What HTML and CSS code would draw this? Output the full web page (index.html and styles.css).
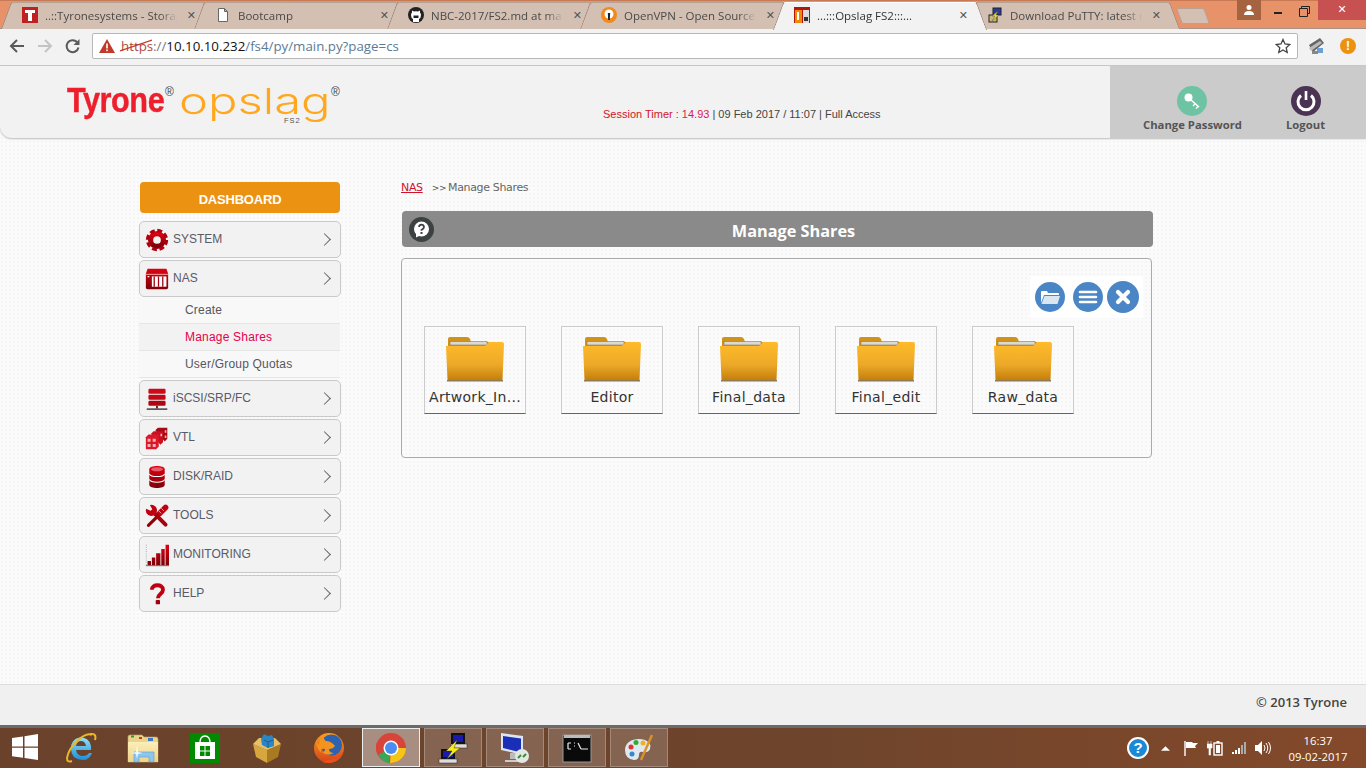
FILE: index.html
```html
<!DOCTYPE html>
<html lang="en">
<head>
<meta charset="utf-8">
<title>Opslag FS2</title>
<link rel="stylesheet" href="styles.css">
</head>
<body>
<svg class="defs" width="0" height="0" aria-hidden="true">
  <defs>
    <linearGradient id="red" x1="0" y1="0" x2="0" y2="1"><stop offset="0" stop-color="#e00012"/><stop offset="1" stop-color="#7c0008"/></linearGradient>
    <linearGradient id="fold" x1="0" y1="0" x2="0" y2="1"><stop offset="0" stop-color="#ffbb2a"/><stop offset=".6" stop-color="#eca928"/><stop offset="1" stop-color="#c47f0b"/></linearGradient>
    <linearGradient id="iebl" x1="0" y1="0" x2="0" y2="1"><stop offset="0" stop-color="#8fe0f8"/><stop offset="1" stop-color="#1c8fd8"/></linearGradient>
    <linearGradient id="foxo" x1="0" y1="0" x2="0" y2="1"><stop offset="0" stop-color="#f5a021"/><stop offset="1" stop-color="#d8401a"/></linearGradient>
    <linearGradient id="expl" x1="0" y1="0" x2="0" y2="1"><stop offset="0" stop-color="#fbeeb8"/><stop offset="1" stop-color="#eed38a"/></linearGradient>
    <symbol id="folder" viewBox="0 0 60 48">
      <path d="M3 4q0-2 2-2h17q2 0 3 2l1 3H50v10H3z" fill="#d1921a"/>
      <rect x="5" y="6.500" width="37" height="3.500" fill="#dcdad0" stroke="#8d7a55" stroke-width=".6"/>
      <path d="M1 11H40l4-4H57q2 0 2 2l-1.500 36H2.500z" fill="url(#fold)"/>
      <rect x="2" y="45" width="56" height="1.500" fill="#8f7a55"/>
    </symbol>
  </defs>
</svg>

<div class="tabstrip">
  <div class="tab"><svg class="fav" viewBox="0 0 16 16"><rect width="16" height="16" fill="#c0201f"/><path d="M3 3h10v3H10v8H6V6H3z" fill="#fff"/></svg><span class="tab-text">..::Tyronesystems - Storag</span><span class="tab-x">✕</span></div>
  <div class="tab"><svg class="fav" viewBox="0 0 16 16"><path d="M3.500 1.500h6l3 3v10h-9z M9.500 1.500v3h3" fill="#fff" stroke="#666"/></svg><span class="tab-text">Bootcamp</span><span class="tab-x">✕</span></div>
  <div class="tab"><svg class="fav" viewBox="0 0 16 16"><circle cx="8" cy="8" r="8" fill="#222"/><path d="M5 15v-3q-2-1-2-4 0-1.500 1-2.500V3.500l2 1q2-.5 4 0l2-1v2q1 1 1 2.500 0 3-2 4v3z" fill="#fff"/><path d="M5.500 8.500h5v2.500h-5z" fill="#222"/></svg><span class="tab-text">NBC-2017/FS2.md at ma</span><span class="tab-x">✕</span></div>
  <div class="tab"><svg class="fav" viewBox="0 0 16 16"><circle cx="8" cy="8" r="8" fill="#f08a1d"/><circle cx="8" cy="7" r="4.500" fill="#fff"/><path d="M6.800 6h2.400l-.4 7H7.200z" fill="#123"/></svg><span class="tab-text">OpenVPN - Open Source</span><span class="tab-x">✕</span></div>
  <div class="tab tab-active"><svg class="fav" viewBox="0 0 16 16"><rect width="16" height="16" fill="#b3150f"/><rect x="1" y="3" width="7" height="13" fill="#f08a00"/><rect x="9" y="3" width="6" height="13" fill="#ddd"/><rect x="3" y="5" width="2" height="8" fill="#fff"/><rect x="10" y="10" width="4" height="4" fill="#333"/></svg><span class="tab-text">...:::Opslag FS2:::...</span><span class="tab-x">✕</span></div>
  <div class="tab"><svg class="fav" viewBox="0 0 16 16"><rect x="6" y="1" width="8" height="7" fill="#2a3a9a" stroke="#222"/><rect x="2" y="8" width="8" height="7" fill="#c9b878" stroke="#222"/><path d="M11 4 5 9h3l-3 5 7-6H9z" fill="#f5e02a" stroke="#444" stroke-width=".4"/></svg><span class="tab-text">Download PuTTY: latest r</span><span class="tab-x">✕</span></div>
  <div class="newtab"></div>
  <div class="winbtns">
    <div class="win-user"><svg viewBox="0 0 12 12" width="12" height="12"><circle cx="6" cy="3.500" r="2.500" fill="#fff"/><path d="M1 11q0-4 5-4t5 4z" fill="#fff"/></svg></div>
    <div class="win-min"></div>
    <div class="win-max"><svg viewBox="0 0 11 11" width="11" height="11"><path d="M2.500 2.500V.5h8v7h-2M.5 2.500h8v8h-8z" fill="none" stroke="#222"/></svg></div>
    <div class="win-close">✕</div>
  </div>
</div>

<div class="toolbar">
  <svg class="nav" viewBox="0 0 16 16"><path d="M15 8H2.500M8 2 2 8l6 6" fill="none" stroke="#5a5a5a" stroke-width="2"/></svg>
  <svg class="nav" viewBox="0 0 16 16"><path d="M1 8h12.500M8 2l6 6-6 6" fill="none" stroke="#c4c4c4" stroke-width="2"/></svg>
  <svg class="nav" viewBox="0 0 16 16"><path d="M13.500 9.500A6 6 0 1 1 12 4" fill="none" stroke="#5a5a5a" stroke-width="2"/><path d="M14.500 1v6h-6z" fill="#5a5a5a"/></svg>
  <div class="omnibox">
    <svg class="warn" viewBox="0 0 16 14"><path d="M8 0l8 14H0z" fill="#c0392b"/><rect x="7.200" y="4.500" width="1.600" height="5" fill="#fff"/><rect x="7.200" y="10.500" width="1.600" height="1.700" fill="#fff"/></svg>
    <span class="url"><span class="scheme">https<svg class="strike" viewBox="0 0 32 12" preserveAspectRatio="none"><path d="M0 11 32 1" stroke="#c0392b" stroke-width="1.300"/></svg></span><span class="url-dim">://</span><span class="url-host">10.10.10.232</span><span class="url-path">/fs4/py/main.py?page=cs</span></span>
    <svg class="star" viewBox="0 0 16 16"><path d="M8 1.500l2 4.500 4.800.5-3.600 3.200 1 4.800L8 12l-4.200 2.500 1-4.800L1.200 6.500 6 6z" fill="none" stroke="#444" stroke-width="1.300"/></svg>
  </div>
  <svg class="ext" viewBox="0 0 20 20"><path d="M3 9l11-7 4 5-11 9z" fill="#666"/><path d="M3 12l11-7 2 2-11 8z" fill="#bbb"/><rect x="11" y="12" width="6" height="5" fill="#6aa0d8"/><rect x="6" y="15" width="6" height="3" fill="#888"/></svg>
  <div class="ext-alert">!</div>
</div>

<header class="pagehead">
  <div class="logo">
    <span class="logo-tyrone">Tyrone</span><span class="reg reg-a">®</span>
    <span class="logo-op"><span class="logo-opslag">opslag</span><span class="logo-fs">FS2</span></span><span class="reg">®</span>
  </div>
  <div class="session"><span class="s-red">Session Timer : </span><span class="s-pink">14.93</span> | 09 Feb 2017 / 11:07 | Full Access</div>
  <div class="headbtns">
    <div class="headbtn">
      <svg class="headicon" viewBox="0 0 30 30"><circle cx="15" cy="15" r="15" fill="#6ec3a2"/><circle cx="11.500" cy="11.500" r="4" fill="#fff"/><path d="M14 14l8 7M18 18l-2 2M21 20.500l-2 2" stroke="#fff" stroke-width="1.500" fill="none"/></svg>
      <span>Change Password</span>
    </div>
    <div class="headbtn">
      <svg class="headicon" viewBox="0 0 30 30"><circle cx="15" cy="15" r="15" fill="#4b3354"/><path d="M10 9.500a8 8 0 1 0 10 0" fill="none" stroke="#fff" stroke-width="3"/><rect x="13.700" y="5" width="2.600" height="9" fill="#fff"/></svg>
      <span>Logout</span>
    </div>
  </div>
</header>

<main class="main">
  <nav class="sidebar">
    <div class="dash">DASHBOARD</div>
    <div class="menu">
      <div class="item"><svg class="micon" viewBox="0 0 28 28"><circle cx="14" cy="14" r="7.500" fill="none" stroke="url(#red)" stroke-width="6"/><circle cx="14" cy="14" r="11" fill="none" stroke="#b00010" stroke-width="4" stroke-dasharray="5.640 3"/></svg><span>SYSTEM</span></div>
      <div class="item"><svg class="micon" viewBox="0 0 28 28"><path d="M3 2h22l2 6v16q0 2-2 2H3q-2 0-2-2V8z" fill="url(#red)"/><rect x="1" y="8" width="26" height="1" fill="#fbb"/><rect x="8" y="11" width="17" height="12" fill="#fff"/><path d="M10 11v12h1.500V11zm5 0v12h1.500V11zm5 0v12h1.500V11z" fill="#a00010"/><rect x="3" y="10.500" width="2" height="1.500" fill="#fff"/></svg><span>NAS</span></div>
      <div class="subs">
        <div class="sub">Create</div>
        <div class="sub sub-on">Manage Shares</div>
        <div class="sub">User/Group Quotas</div>
      </div>
      <div class="item"><svg class="micon" viewBox="0 0 28 28"><rect x="4" y="2" width="20" height="6" rx="1.500" fill="#cc0a18"/><rect x="4" y="9" width="20" height="6" rx="1.500" fill="#c00816"/><rect x="4" y="16" width="20" height="6" rx="1.500" fill="#b00612"/><rect x="13" y="22" width="2" height="3" fill="#700"/><rect x="2" y="25" width="24" height="1.600" fill="#333"/></svg><span>iSCSI/SRP/FC</span></div>
      <div class="item"><svg class="micon" viewBox="0 0 28 28"><path d="M12 5l3-3h11v13l-3 3z" fill="#a80a14"/><path d="M7 9l3-3h11v13l-3 3z" fill="#c8101e"/><path d="M1 13l3-3h12v14l-3 3H1z" fill="#d9182a"/><path d="M3 15h3.500v3.500H3zm6 0h3.500v3.500H9zm-6 6h3.500v3.500H3zm6 0h3.500v3.500H9zM18 9h2v3h-2zM23 5h2v3h-2zM23 11h2v3h-2z" fill="#f6b0b0"/></svg><span>VTL</span></div>
      <div class="item"><svg class="micon" viewBox="0 0 28 28"><path d="M5 5c0-5 18-5 18 0v18c0 5-18 5-18 0z" fill="url(#red)"/><path d="M5 10.500c2 4 16 4 18 0M5 17c2 4 16 4 18 0" fill="none" stroke="#fff" stroke-width="1.200"/><ellipse cx="14" cy="5" rx="7" ry="2.400" fill="#e85a64"/></svg><span>DISK/RAID</span></div>
      <div class="item"><svg class="micon" viewBox="0 0 28 28"><path d="M4 25 17 12" stroke="#900008" stroke-width="3.600" stroke-linecap="round"/><path d="M17 11 24 4" stroke="#c00010" stroke-width="6.500" stroke-linecap="round"/><path d="M19 11l-3-3M22 8l-3-3" stroke="#f2f2f2" stroke-width=".8"/><path d="M9 9 24 24" stroke="#a8000e" stroke-width="4.600" stroke-linecap="round"/><circle cx="7.500" cy="7.500" r="6.500" fill="#c00010"/><path d="M0 5l6.500 3L8.500 6 5 0H0z" fill="#f2f2f2"/></svg><span>TOOLS</span></div>
      <div class="item"><svg class="micon" viewBox="0 0 28 28"><path d="M1.500 2v24" stroke="#999" stroke-dasharray="1 1.500"/><path d="M3 21h4v5H3zm5-4h4v9H8zm5-5h5v14h-5zm6-5h4v19h-4zm5-5h4v24h-4z" fill="url(#red)"/><rect x="1" y="26" width="27" height="1" fill="#555"/></svg><span>MONITORING</span></div>
      <div class="item"><svg class="micon" viewBox="0 0 28 28"><path d="M8 9c0-7 13-7 13 0 0 5-6 5-6 10" fill="none" stroke="#c00010" stroke-width="4.500"/><rect x="12.500" y="21" width="5" height="5" rx="1" fill="#a00010"/></svg><span>HELP</span></div>
    </div>
  </nav>
  <section class="content">
    <div class="crumb"><a class="crumb-link">NAS</a><span class="crumb-sep">&gt;&gt;</span><span>Manage Shares</span></div>
    <div class="titlebar">
      <svg class="help" viewBox="0 0 25 25"><circle cx="12.500" cy="12.500" r="12.500" fill="#3c4242"/><circle cx="12.500" cy="12" r="7.500" fill="#fff"/><path d="M7 16.500v4l4-2z" fill="#fff"/><path d="M10 10q.3-2.300 2.500-2.300T15 10q0 1.500-2.500 3v.8" fill="none" stroke="#3c4242" stroke-width="1.800"/><rect x="11.500" y="15" width="2" height="2" fill="#3c4242"/></svg>
      <h1>Manage Shares</h1>
    </div>
    <div class="panel">
      <div class="actions">
        <svg class="act" viewBox="0 0 30 30"><circle cx="15" cy="15" r="15" fill="#4a86c5"/><path d="M6 10q0-1 1-1h5l1 2h10q1 0 1 1v1H9l-3 8z" fill="#fff"/><path d="M9.500 14H25l-2.500 8H6.500z" fill="#d9e6f3"/></svg>
        <svg class="act" viewBox="0 0 30 30"><circle cx="15" cy="15" r="15" fill="#4a86c5"/><path d="M7 10h16M7 15h16M7 20h16" stroke="#fff" stroke-width="2.600" stroke-linecap="round"/></svg>
        <svg class="act act-x" viewBox="0 0 32 32"><circle cx="16" cy="16" r="16" fill="#4a86c5"/><path d="M11 11l10 10M21 11 11 21" stroke="#fff" stroke-width="4.200" stroke-linecap="round"/></svg>
      </div>
      <div class="tiles">
        <div class="tile"><svg class="fold"><use href="#folder"/></svg><span>Artwork_In...</span></div>
        <div class="tile"><svg class="fold"><use href="#folder"/></svg><span>Editor</span></div>
        <div class="tile"><svg class="fold"><use href="#folder"/></svg><span>Final_data</span></div>
        <div class="tile"><svg class="fold"><use href="#folder"/></svg><span>Final_edit</span></div>
        <div class="tile"><svg class="fold"><use href="#folder"/></svg><span>Raw_data</span></div>
      </div>
    </div>
  </section>
</main>

<footer class="pagefoot">© 2013 Tyrone</footer>

<div class="taskbar">
  <div class="start"><svg viewBox="0 0 26 26" width="26" height="26"><path d="M0 4l11-1.500V12.500H0zM12.500 2.300 26 0v12.500H12.500zM0 13.800h11v10L0 22.300zM12.500 13.800H26V26l-13.500-2z" fill="#fff"/></svg></div>
  <div class="slot"><svg class="tico" viewBox="0 0 32 32"><path d="M6 17a10 10 0 0 1 20-3v4H11q1 6 7 6 4 0 6-3h3q-3 8-10 7Q6 27 6 17zm5-3h10q-1-5-5-5t-5 5z" fill="url(#iebl)"/><path d="M27 3C20-1 4 14 2 26q0 5 5 3" fill="none" stroke="#e8b82a" stroke-width="2"/><path d="M25 2q7-1 5 6" fill="none" stroke="#e8b82a" stroke-width="2"/></svg></div>
  <div class="slot"><svg class="tico" viewBox="0 0 32 32"><path d="M1 5q0-2 2-2h12l2 2h12q2 0 2 2v23H1z" fill="#e9d48a" stroke="#b9a263" stroke-width=".6"/><rect x="4" y="3.500" width="3" height="2" fill="#2a9a3a"/><rect x="12" y="5" width="3" height="2" fill="#c03a2a"/><rect x="21" y="6" width="5" height="3" fill="#3a7ac8"/><path d="M1 10h30v20H1z" fill="url(#expl)"/><path d="M7 20h20v10h-5v-5H12v5H7z" fill="#8cc6ec" stroke="#5a9ac8" stroke-width=".6"/><path d="M9 20l1-7 1 7 5 1-5 1-1 5-1-5-5-1z" fill="#fff" opacity=".85"/></svg></div>
  <div class="slot"><svg class="tico" viewBox="0 0 32 32"><rect x="1" y="1" width="30" height="30" fill="#008a00"/><path d="M11 11q0-7 5-7t5 7" fill="none" stroke="#fff" stroke-width="1.300"/><path d="M6 10h20v17H6z" fill="#fff"/><path d="M11 14h4.500v4.500H11zm5.500 0H21v4.500h-4.500zM11 19.500h4.500V24H11zm5.500 0H21V24h-4.500z" fill="#008a00"/></svg></div>
  <div class="slot"><svg class="tico" viewBox="0 0 32 32"><path d="M2 12l14 6v13L5 25z" fill="#d8a63e"/><path d="M30 12l-14 6v13l11-6z" fill="#a87a22"/><path d="M2 12l6-6 16 0 6 6-14 6z" fill="#e8c068"/><path d="M10 7l3-5 4 2 4-1 2 4 0 7-6 2-6-3z" fill="#2d86c4"/><path d="M13 8l4 2 5-2M17 10v6" stroke="#1a5f94" fill="none"/></svg></div>
  <div class="slot"><svg class="tico" viewBox="0 0 32 32"><circle cx="16" cy="16" r="15" fill="url(#foxo)"/><circle cx="18.500" cy="13" r="10.500" fill="#2d62ae"/><path d="M3 8q1 4 3 5 0-6 5-10-1 4 2 6 5 0 9 5-2 3-6 3 0 4 5 4-7 4-12-1 3 0 3-3-5-1-4 4-5-6-5-13z" fill="#f4931d"/><path d="M9 30q10 3 17-3 4-4 5-10-2 7-9 9-7 2-13 4z" fill="#e8501a"/></svg></div>
  <div class="slot slot-on"><svg class="tico" viewBox="0 0 32 32"><circle cx="16" cy="16" r="15" fill="#d8443a"/><path d="M16 16 3 23a15 15 0 0 1-1-13z" fill="#d8443a"/><path d="M16 16h15a15 15 0 0 1-15 15h-1z" fill="#f5c518"/><path d="M16 16 14 31A15 15 0 0 1 3 23z" fill="#3aa757"/><circle cx="16" cy="16" r="7.500" fill="#fff"/><circle cx="16" cy="16" r="6" fill="#4a8cf0"/></svg></div>
  <div class="slot slot-pin"><svg class="tico" viewBox="0 0 32 32"><rect x="14" y="1" width="14" height="11" fill="#111"/><rect x="16" y="3" width="10" height="7" fill="#1a1ab0"/><rect x="4" y="17" width="14" height="10" fill="#111"/><rect x="6" y="19" width="10" height="6" fill="#1a1ab0"/><rect x="14" y="12" width="16" height="4" fill="#ddd" stroke="#222" stroke-width=".5"/><rect x="2" y="27" width="18" height="4" fill="#ddd" stroke="#222" stroke-width=".5"/><path d="M20 8 9 19h6l-5 8 13-11h-6z" fill="#f5ec1a" stroke="#333" stroke-width=".4"/></svg></div>
  <div class="slot slot-pin"><svg class="tico" viewBox="0 0 32 32"><path d="M2 1l22 3v19L2 18z" fill="#dde3f0"/><path d="M4 4l18 2.500v14L4 16z" fill="#1a2fb8"/><rect x="11" y="21" width="6" height="6" fill="#bbb"/><path d="M6 28h14v2H6z" fill="#ccc"/><circle cx="23" cy="24" r="7" fill="#e4e8e4"/><path d="M19 26l3-3M27 22l-3 3" stroke="#3a8a3a" stroke-width="2"/></svg></div>
  <div class="slot slot-pin"><svg class="tico" viewBox="0 0 32 32"><rect x="2" y="3" width="28" height="27" fill="#0a0a0a" stroke="#999"/><rect x="3" y="3" width="26" height="3" fill="#bbb"/><path d="M7 11h3M7 17h3M7 11v6M13 11h1M13 14h1M17 11l3 6M20 17h7" stroke="#eee" stroke-width="1.200" fill="none"/></svg></div>
  <div class="slot slot-pin"><svg class="tico" viewBox="0 0 32 32"><path d="M2 18C2 8 14 5 22 8q7 3 5 9-2 4-7 3-4-1-4 3 0 5-5 5Q2 27 2 18z" fill="#dfe8ef"/><circle cx="8" cy="15" r="2.500" fill="#d33"/><circle cx="13" cy="10.500" r="2.500" fill="#3a3"/><circle cx="20" cy="11" r="2.500" fill="#f0b020"/><circle cx="9" cy="22" r="2.500" fill="#38c"/><path d="M18 28 29 3" stroke="#d9922a" stroke-width="2.500"/></svg></div>
  <div class="tray">
    <div class="tray-help">?</div>
    <svg class="tray-ico tray-up" viewBox="0 0 10 6"><path d="M0 6l5-5 5 5z" fill="#fff"/></svg>
    <svg class="tray-ico" viewBox="0 0 16 16"><path d="M2 1v15" stroke="#fff" stroke-width="1.400"/><path d="M3 2h6l1 1h5l-3 3 1 2H3z" fill="#fff"/></svg>
    <svg class="tray-ico" viewBox="0 0 16 16"><path d="M1 1v3M4 1v3M0 4h5v4H3.500v7H2V8H0z" fill="#fff" stroke="#fff" stroke-width=".6"/><rect x="7" y="3" width="8" height="12" fill="none" stroke="#fff" stroke-width="1.400"/><rect x="9" y="5" width="4" height="8" fill="#fff"/><rect x="9.500" y="1" width="3" height="2" fill="#fff"/></svg>
    <svg class="tray-ico" viewBox="0 0 16 16"><path d="M1 12h2v2H1zM4 10h2v4H4zM7 8h2v6H7z" fill="#fff"/><path d="M10 5h2v9h-2zM13 2h2v12h-2z" fill="#aaa"/></svg>
    <svg class="tray-ico" viewBox="0 0 16 16"><path d="M0 5h3l4-4v14l-4-4H0z" fill="#fff"/><path d="M9 5q2 3 0 6M11 3q3.500 5 0 10M13.500 2q4 6 0 12" fill="none" stroke="#fff" stroke-width="1"/></svg>
    <div class="clock"><span>16:37</span><span>09-02-2017</span></div>
  </div>
</div>
</body>
</html>
```

FILE: styles.css
```css
* { box-sizing: border-box; }
html, body { margin: 0; padding: 0; }
body {
  width: 1366px;
  height: 768px;
  overflow: hidden;
  display: flex;
  flex-direction: column;
  font-family: "Liberation Sans", Arial, sans-serif;
  background: #fbfbfb radial-gradient(#f5f5f5 1px, transparent 1px) 0 0 / 4px 4px;
}
.defs { position: absolute; }

/* browser tab strip */
.tabstrip {
  height: 29px;
  flex: none;
  display: flex;
  padding: 1px 0 0 6px;
  background: #e8926a;
  border-top: 1px solid #c87a55;
  border-bottom: 1px solid #a89084;
}
.tab {
  position: relative;
  width: 204px;
  height: 27px;
  margin-right: -11px;
  display: flex;
  align-items: center;
  padding: 0 14px 1px 16px;
  gap: 7px;
  font: 11.500px "Open Sans", sans-serif;
  color: #4a4a4a;
}
.tab::before, .tab::after {
  content: "";
  position: absolute;
  top: 0;
  bottom: 0;
  width: 55%;
  background: #d4bfb3;
  border-top: 1px solid #b8a294;
}
.tab::before {
  left: 0;
  transform: skewX(-20deg);
  border-left: 1px solid #9a8478;
  border-radius: 3px 0 0 0;
}
.tab::after {
  right: 0;
  transform: skewX(20deg);
  border-right: 1px solid #9a8478;
  border-radius: 0 3px 0 0;
}
.tab > * { position: relative; z-index: 1; }
.tab-active { z-index: 2; height: 28px; color: #333; padding-bottom: 2px; }
.tab-active::before, .tab-active::after { background: #f2f2f2; border-top-color: #fff; }
.fav { width: 16px; height: 16px; flex: none; }
.tab-text {
  flex: 1;
  min-width: 0;
  white-space: nowrap;
  -webkit-mask-image: linear-gradient(to right, #000 85%, transparent 98%);
  mask-image: linear-gradient(to right, #000 85%, transparent 98%);
}
.tab-x { font-size: 11px; color: #555; font-family: "DejaVu Sans", sans-serif; font-weight: bold; }
.newtab {
  width: 28px;
  height: 16px;
  margin: 6px 0 0 15px;
  background: #d4bfb3;
  border: 1px solid #b8a294;
  border-radius: 2px;
  transform: skewX(20deg);
}
.winbtns {
  margin: -2px 0 0 auto;
  display: flex;
  height: 20px;
}
.win-user {
  width: 24px;
  margin-right: 13px;
  background: #a5633f;
  display: flex;
  align-items: center;
  justify-content: center;
}
.win-min { width: 25px; position: relative; }
.win-min::after { content: ""; position: absolute; left: 0; top: 12px; width: 8px; height: 2px; background: #222; }
.win-max { width: 11px; padding-top: 3px; margin-right: 8px; }
.win-close {
  width: 48px;
  background: #c75050;
  color: #fff;
  text-align: center;
  font: bold 11px/20px "DejaVu Sans", sans-serif;
}

/* browser toolbar */
.toolbar {
  height: 37px;
  flex: none;
  display: flex;
  align-items: center;
  padding: 0 9px 2px;
  background: #f2f2f2;
  border-bottom: 1px solid #c8c8c8;
  gap: 12px;
}
.nav { width: 16px; height: 16px; flex: none; }
.omnibox {
  width: 1206px;
  height: 26px;
  margin-left: -1px;
  display: flex;
  align-items: center;
  background: #fff;
  border: 1px solid #b8b8b8;
  border-radius: 2px;
  padding: 0 6px;
}
.warn { width: 16px; height: 14px; margin-right: 6px; flex: none; }
.url { font: 13.300px "Open Sans", sans-serif; color: #5c7a94; white-space: nowrap; }
.scheme { position: relative; color: #b04a3e; }
.strike { position: absolute; left: -1px; top: 2px; width: 32px; height: 13px; }
.url-dim { color: #777; }
.url-host { color: #111; }
.star { width: 16px; height: 16px; margin-left: auto; flex: none; }
.ext { width: 20px; height: 20px; flex: none; margin-left: -4px; }
.ext-alert {
  width: 16px;
  height: 16px;
  margin-left: 2px;
  border-radius: 50%;
  background: #ec9213;
  color: #fff;
  font: bold 12px/16px "Liberation Sans", sans-serif;
  text-align: center;
}

/* page header */
.pagehead {
  height: 72px;
  flex: none;
  display: flex;
  background: #f2f2f2;
  border-radius: 0 0 0 12px;
  box-shadow: 0 1px 2px #bbb;
  position: relative;
}
.logo {
  width: 603px;
  padding: 15px 0 0 67px;
  display: flex;
  align-items: flex-start;
  white-space: nowrap;
}
.logo-tyrone {
  display: inline-block;
  width: 96px;
  font: bold 33px/38px "Liberation Sans", sans-serif;
  color: #ee1f2d;
  letter-spacing: -.5px;
  -webkit-text-stroke: .4px #ee1f2d;
  transform: scale(.93, 1.05);
  transform-origin: 0 50%;
}
.reg { font-size: 12px; color: #444; margin-top: 4px; }
.reg-a { width: 10px; margin: 4px 4px 0 2px; }
.logo-op { position: relative; width: 152px; height: 42px; }
.logo-opslag {
  display: block;
  margin-top: 2px;
  font: 300 36px/36px Inter, sans-serif;
  color: #ffa81f;
  transform: scaleX(1.36);
  transform-origin: 0 50%;
}
.logo-fs {
  position: absolute;
  left: 105px;
  top: 37px;
  font: 7.500px/5px "Liberation Sans", sans-serif;
  color: #555;
  letter-spacing: 1px;
}
.session {
  width: 507px;
  padding-top: 42px;
  font-size: 11px;
  line-height: 13px;
  color: #444;
  white-space: nowrap;
}
.s-red { color: #d2122a; }
.s-pink { color: #d81b50; }
.headbtns {
  width: 256px;
  margin-left: auto;
  background: #cbcbcb;
  display: flex;
  padding-left: 33px;
  gap: 44px;
}
.headbtn {
  display: flex;
  flex-direction: column;
  align-items: center;
  padding-top: 20px;
  font: bold 11.300px/14px "Open Sans", sans-serif;
  color: #555;
  white-space: nowrap;
}
.headicon { width: 30px; height: 30px; margin-bottom: 2px; }

/* main */
.main { flex: 1; display: flex; padding: 44px 0 0 139px; min-height: 0; }
.sidebar { width: 202px; flex: none; }
.dash {
  width: 200px;
  height: 31px;
  margin-left: 1px;
  background: #ec9213;
  border-radius: 4px;
  color: #fff;
  font-weight: bold;
  font-size: 13px;
  line-height: 35px;
  text-align: center;
  letter-spacing: -.2px;
}
.menu { margin-top: 8px; display: flex; flex-direction: column; gap: 2px; }
.item {
  position: relative;
  height: 37px;
  display: flex;
  align-items: center;
  padding: 0 0 2px 5px;
  gap: 4px;
  background: #f2f2f2;
  border: 1px solid #c9c9c9;
  border-radius: 5px;
  font-size: 12px;
  color: #5a5a66;
}
.item::after {
  content: "";
  position: absolute;
  right: 11px;
  top: 13px;
  width: 8px;
  height: 8px;
  border-top: 1.300px solid #666;
  border-right: 1.300px solid #666;
  transform: rotate(45deg);
}
.micon { width: 24px; height: 24px; flex: none; margin-top: 2px; }
.subs { margin: -2px 1px 0 0; background: #f8f8f8; }
.sub {
  height: 27px;
  padding: 6px 0 0 46px;
  font-size: 12px;
  line-height: 14px;
  letter-spacing: .2px;
  color: #56565f;
  border-bottom: 1px solid #e6e6e6;
}
.sub-on { color: #e6004c; background: #f2f2f2; }

/* content */
.content { width: 752px; margin-left: 60px; flex: none; }
.crumb {
  display: flex;
  align-items: baseline;
  height: 29px;
  font: 11px/11px "DejaVu Sans", sans-serif;
  color: #666;
  letter-spacing: -.35px;
}
.crumb-link { color: #d2122a; text-decoration: underline; margin-right: 9px; }
.crumb-sep { margin-right: 2px; color: #555; font-size: 9px; }
.titlebar {
  width: 751px;
  height: 36px;
  margin-left: 1px;
  position: relative;
  display: flex;
  align-items: center;
  justify-content: center;
  background: #8a8a8a;
  border-radius: 4px;
}
.titlebar h1 {
  margin: 4px 0 0 32px;
  font: bold 16.300px "Open Sans", sans-serif;
  color: #fff;
}
.help { position: absolute; left: 7px; top: 6px; width: 25px; height: 25px; }
.panel {
  width: 751px;
  height: 200px;
  margin-top: 11px;
  position: relative;
  border: 1px solid #aaa;
  border-radius: 4px;
  padding: 67px 0 0 22px;
}
.actions {
  position: absolute;
  right: 8px;
  top: 17px;
  display: flex;
  align-items: center;
  gap: 8px;
  padding: 5px 4px 5px 5px;
  background: #fff;
}
.act { width: 30px; height: 30px; flex: none; }
.act-x { width: 32px; height: 32px; margin-left: -4px; }
.tiles { display: flex; gap: 35px; }
.tile {
  width: 102px;
  height: 88px;
  display: flex;
  flex-direction: column;
  align-items: center;
  padding-top: 8px;
  border: 1px solid #ccc;
  border-bottom-color: #2f6ae0;
  font: 14px/20px "DejaVu Sans", sans-serif;
  letter-spacing: .3px;
  color: #333;
  white-space: nowrap;
}
.fold { width: 60px; height: 48px; margin-bottom: 4px; }

/* footer */
.pagefoot {
  height: 41px;
  flex: none;
  padding: 10px 19px 0 0;
  text-align: right;
  background: #f0f0f0;
  border-top: 1px solid #ddd;
  font: 600 13px/15px "Open Sans", sans-serif;
  color: #444;
}

/* windows taskbar */
.taskbar {
  height: 43px;
  flex: none;
  display: flex;
  gap: 4px;
  background: linear-gradient(to right, #6a412a, #6e452c 60%, #84492a);
  border-top: 3px solid #6a6a6a;
}
.start { width: 48px; padding: 6px 0 0 12px; }
.slot {
  width: 58px;
  display: flex;
  align-items: center;
  justify-content: center;
  border: 1px solid transparent;
  margin-bottom: 1px;
}
.slot-pin { background: #846350; border-color: #a3897a; }
.slot-on { background: #a78e80; border-color: #eee; }
.tico { width: 32px; height: 32px; }
.tray {
  margin-left: auto;
  display: flex;
  align-items: center;
  padding-right: 16px;
}
.tray-help {
  width: 22px;
  height: 22px;
  margin-right: 12px;
  border-radius: 50%;
  background: #1a8ad4;
  border: 2px solid #fff;
  color: #fff;
  font: bold 15px/18px "Liberation Sans", sans-serif;
  text-align: center;
}
.tray-ico { width: 16px; height: 16px; margin-right: 8px; }
.tray-up { width: 9px; height: 6px; margin-right: 13px; }
.clock {
  width: 64px;
  margin-left: 7px;
  padding-top: 1px;
  display: flex;
  flex-direction: column;
  align-items: center;
  font: 11.300px/16px "Open Sans", sans-serif;
  color: #fff;
}
```
